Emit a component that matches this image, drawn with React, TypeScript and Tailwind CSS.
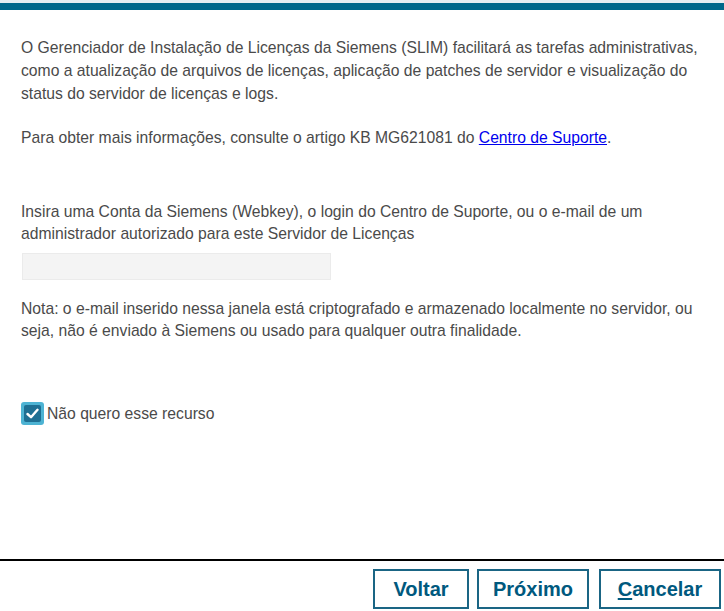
import React from "react";

export default function App() {
  return (
    <div className="w-[724px] h-[611px] bg-white flex flex-col overflow-hidden font-['Liberation_Sans',Arial,sans-serif]">
      <div className="h-[3px] bg-[#e6edf1]" />
      <div className="h-[7px] bg-[#00678a]" />
      <div className="flex-1 flex flex-col px-[21px] text-[15.7px] text-[#4a4a4a]">
        <p className="mt-[26px] leading-[23px]">
          O Gerenciador de Instalação de Licenças da Siemens (SLIM) facilitará as tarefas administrativas,
          como a atualização de arquivos de licenças, aplicação de patches de servidor e visualização do
          status do servidor de licenças e logs.
        </p>
        <p className="mt-[21px] leading-[23px]">
          Para obter mais informações, consulte o artigo KB MG621081 do{" "}
          <a className="text-[#0000ee] underline" href="#">Centro de Suporte</a>.
        </p>
        <p className="mt-[52px] leading-[22px]">
          Insira uma Conta da Siemens (Webkey), o login do Centro de Suporte, ou o e-mail de um
          administrador autorizado para este Servidor de Licenças
        </p>
        <div className="mt-[8px] ml-[1px] w-[309px] h-[27px] bg-[#f4f4f4] border border-[#ebebeb]" />
        <p className="mt-[18px] leading-[22px]">
          Nota: o e-mail inserido nessa janela está criptografado e armazenado localmente no servidor, ou
          seja, não é enviado à Siemens ou usado para qualquer outra finalidade.
        </p>
        <div className="mt-[60px] flex items-center gap-[3px]">
          <div className="w-[23px] h-[23px] rounded-[3px] bg-[#4db3d3] flex items-center justify-center">
            <div className="w-[17px] h-[17px] rounded-[2px] bg-[#1e6f93] flex items-center justify-center">
              <svg width="13" height="11" viewBox="0 0 13 11">
                <path d="M1.5 6 L5 9.2 L11.5 1.8" fill="none" stroke="white" strokeWidth="2.4" strokeLinecap="round" strokeLinejoin="round" />
              </svg>
            </div>
          </div>
          <span>Não quero esse recurso</span>
        </div>
      </div>
      <div className="h-[2px] bg-black" />
      <div className="h-[50px] flex items-start justify-end pt-[8px] pr-[3px]">
        <button className="w-[96px] h-[40px] border-2 border-[#1a6584] text-[#00597e] font-bold text-[20px]">
          Voltar
        </button>
        <button className="ml-[8px] w-[112px] h-[40px] border-2 border-[#1a6584] text-[#00597e] font-bold text-[20px]">
          Próximo
        </button>
        <button className="ml-[10px] w-[122px] h-[40px] border-2 border-[#1a6584] text-[#00597e] font-bold text-[20px]">
          <span className="underline underline-offset-2">C</span>ancelar
        </button>
      </div>
    </div>
  );
}
